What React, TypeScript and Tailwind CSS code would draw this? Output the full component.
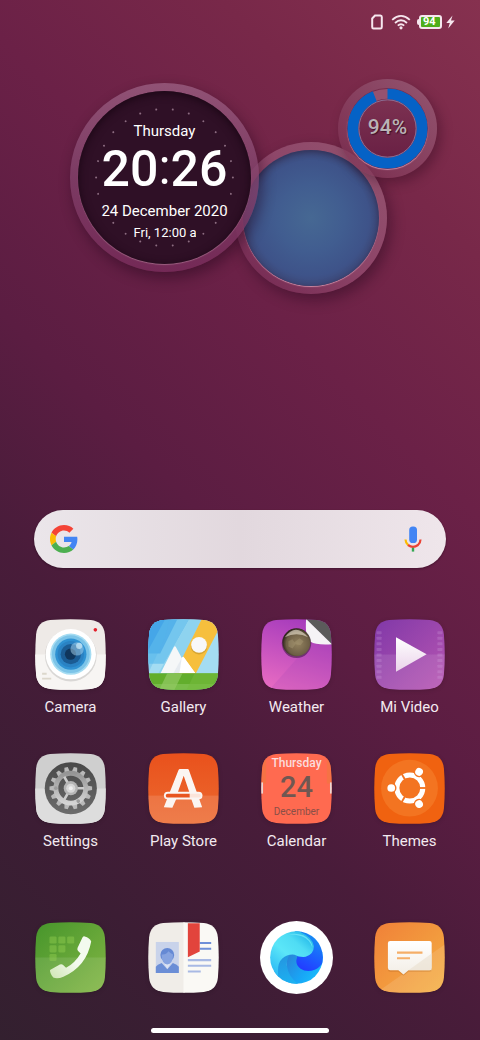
import type { ReactNode } from "react";

const SQUIRCLE =
  "M15 1.1 Q35 -.6 55 1.1 Q67.6 2.4 68.9 15 Q70.6 35 68.9 55 Q67.6 67.6 55 68.9 Q35 70.6 15 68.9 Q2.4 67.6 1.1 55 Q-.6 35 1.1 15 Q2.4 2.4 15 1.1Z";

function Tile({ id, children }: { id: string; children: ReactNode }) {
  return (
    <svg viewBox="0 0 70 70" className="block size-[71px] drop-shadow-sm" aria-hidden="true">
      <defs>
        <clipPath id={`${id}-clip`}>
          <path d={SQUIRCLE} />
        </clipPath>
      </defs>
      <g clipPath={`url(#${id}-clip)`}>{children}</g>
    </svg>
  );
}

function Gradient({ id, from, to, diagonal = false }: { id: string; from: string; to: string; diagonal?: boolean }) {
  return (
    <linearGradient id={id} x1="0" y1="0" x2={diagonal ? "1" : "0"} y2="1">
      <stop offset="0" stopColor={from} />
      <stop offset="1" stopColor={to} />
    </linearGradient>
  );
}

function CameraIcon() {
  return (
    <Tile id="camera">
      <rect width="70" height="70" fill="#eeeae7" />
      <rect y="35" width="70" height="35" fill="#f7f5f3" />
      <circle cx="35.3" cy="36" r="25.5" fill="#000" opacity=".12" />
      <circle cx="35.3" cy="34.7" r="24.8" fill="#fff" />
      <circle cx="35.3" cy="34.7" r="20.3" fill="#a5dcf2" />
      <circle cx="35.3" cy="34.7" r="18.6" fill="#7cc4e8" />
      <circle cx="35.3" cy="34.7" r="15.4" fill="#2f92d3" />
      <circle cx="35.3" cy="34.7" r="13" fill="#2a82c3" />
      <circle cx="35.3" cy="34.7" r="10" fill="#1b5c94" />
      <circle cx="35" cy="34.7" r="5.5" fill="#10365c" />
      <circle cx="41.5" cy="29.5" r="6.6" fill="#a9d5ef" opacity=".5" />
      <circle cx="43.5" cy="26.5" r="3" fill="#d9f1fa" opacity=".65" />
      <circle cx="59.5" cy="10.7" r="1.8" fill="#e3202b" />
      <path d="M7 54h4.5M7 58.7h9" stroke="#dcd7cc" strokeWidth="1.8" />
    </Tile>
  );
}

function GalleryIcon() {
  return (
    <Tile id="gallery">
      <rect width="70" height="70" fill="#a4dcf2" />
      <path d="M0 0H41L16 44H0Z" fill="#74c6ee" />
      <path d="M0 0H29L12 34H0Z" fill="#55b2ea" />
      <path d="M0 0H17L0 31Z" fill="#3e9ee6" />
      <path d="M41 0H53L27 54H10Z" fill="#8ed3ef" />
      <path d="M0 54L17 18L21 0H0Z" fill="#54b4ea" opacity=".35" />
      <path d="M53 0H75L47 54H26Z" fill="#f6bf3d" />
      <rect y="53.5" width="70" height="17" fill="#62ae2c" />
      <path d="M0 64H70V70H0Z" fill="#79bd49" />
      <path d="M19 53.5H34L26 70H11Z" fill="#93c964" opacity=".7" />
      <path d="M46 53.5H70L62 70H38Z" fill="#74b93c" opacity=".6" />
      <path d="M12.5 53.2L25.5 27.5Q26.5 26 27.5 27.5L33.3 38.5L34.8 37L46.5 53.2Z" fill="#f5f7f8" />
      <path d="M33.3 38.5Q34.5 36.5 35.6 38.3L46.5 53.2H25Z" fill="#fff" />
      <path d="M33.3 38.5L25 53.2H31Z" fill="#dbe3ea" opacity=".7" />
      <circle cx="50.3" cy="27" r="8" fill="#8a6717" opacity=".3" />
      <circle cx="50.3" cy="25.5" r="7.8" fill="#f8f8f8" />
    </Tile>
  );
}

function WeatherIcon() {
  return (
    <Tile id="weather">
      <defs>
        <linearGradient id="weather-bg" x1=".6" y1="0" x2=".3" y2="1">
          <stop offset="0" stopColor="#a63bbc" />
          <stop offset="1" stopColor="#e66ac2" />
        </linearGradient>
        <radialGradient id="weather-moon" cx=".55" cy=".55" r=".55">
          <stop offset="0" stopColor="#93825f" />
          <stop offset=".75" stopColor="#6d5e45" />
          <stop offset="1" stopColor="#2e251c" />
        </radialGradient>
      </defs>
      <rect width="70" height="70" fill="url(#weather-bg)" />
      <path d="M70 0V70H8Z" fill="#9b45b4" opacity=".18" />
      <path d="M44 0H70V26Z" fill="#5b5b5b" />
      <path d="M44.5 0Q43 18 49 22.5Q54 26 70 25Z" fill="#f5f3f6" />
      <circle cx="35" cy="24" r="14.5" fill="#2a1030" opacity=".5" />
      <circle cx="35" cy="23" r="13.8" fill="url(#weather-moon)" />
      <path d="M23.5 18Q34 3 46.5 18Q35 12 23.5 18Z" fill="#eee6d4" opacity=".6" />
      <path d="M27 22l4-2 2 3 5-4 4 3-3 4-5-1-3 4-4-2z" fill="#b3a27e" opacity=".35" />
    </Tile>
  );
}

const FILM_HOLES = [12, 17.5, 23, 28.5, 34, 39.5, 45, 50.5, 56];

function VideoIcon() {
  return (
    <Tile id="video">
      <defs>
        <Gradient id="video-bg" from="#8038a8" to="#b856b2" diagonal />
        <Gradient id="video-play" from="#fff" to="#ead3ea" />
      </defs>
      <rect width="70" height="70" fill="url(#video-bg)" />
      <rect y="35" width="70" height="35" fill="#fff" opacity=".1" />
      {FILM_HOLES.map((y) => (
        <g key={y} fill="#dcb2e8" opacity=".22">
          <rect x="2.5" y={y} width="5" height="3" rx=".6" />
          <rect x="62.5" y={y} width="5" height="3" rx=".6" />
        </g>
      ))}
      <path d="M21.7 18L51.9 34.7L21.7 52Z" fill="url(#video-play)" />
    </Tile>
  );
}

const TEETH = Array.from({ length: 14 }, (_, i) => ((i + 0.5) * 360) / 14);

function SettingsIcon() {
  return (
    <Tile id="settings">
      <defs>
        <Gradient id="settings-gear" from="#959595" to="#d4d4d4" />
        <Gradient id="settings-well" from="#484848" to="#6c6c6c" />
      </defs>
      <rect width="70" height="70" fill="#cfcfcf" />
      <rect y="35" width="70" height="35" fill="#dddddd" />
      <circle cx="35.3" cy="34.7" r="25.7" fill="url(#settings-well)" />
      <g transform="translate(35.3 34.7)">
        {TEETH.map((a) => (
          <path key={a} d="M-2.7 -16L-1.7 -21H1.7L2.7 -16Z" fill="#b9b9b9" transform={`rotate(${a})`} />
        ))}
        <circle r="14.7" fill="none" stroke="url(#settings-gear)" strokeWidth="4.8" />
        {[0, 120, 240].map((a) => (
          <path key={a} d="M0 -1.3H13V1.3H0Z" fill="#cccccc" transform={`rotate(${a})`} />
        ))}
        {[60, 180, 300].map((a) => (
          <circle key={a} cx="14.7" r="1.8" fill="#9c9c9c" transform={`rotate(${a})`} />
        ))}
        <circle r="7" fill="#b5b5b5" />
        <circle r="4.5" fill="#d7d7d7" />
        <circle r="2" fill="#efefef" />
      </g>
    </Tile>
  );
}

function PlayStoreIcon() {
  return (
    <Tile id="store">
      <defs>
        <Gradient id="store-bg" from="#e9511c" to="#ec6a30" />
      </defs>
      <rect width="70" height="70" fill="url(#store-bg)" />
      <rect y="42" width="70" height="28" fill="#fff" opacity=".13" />
      <path
        d="M31.5 15.8H39Q40 15.8 40.4 17L53.4 53.5L45.7 54L42.6 45H28L24 54L15.6 53.5L30 17Q30.5 15.8 31.5 15.8ZM35.2 22.5L29.5 38.5H40.7Z"
        fill="#fbf5f2"
        fillRule="evenodd"
      />
      <rect x="15.7" y="38.2" width="38" height="7.6" rx="3.8" fill="#fbf5f2" />
      <path d="M19.4 40.2H41.2V43.9H19.4A1.85 1.85 0 0 1 19.4 40.2Z" fill="#e8541f" />
      <path d="M41.2 40.2H50A1.85 1.85 0 0 1 50 43.9H41.2Z" fill="#fbe4da" />
    </Tile>
  );
}

function CalendarIcon() {
  return (
    <span className="relative block size-[71px]">
      <Tile id="calendar">
        <rect width="70" height="70" fill="#ff6a50" />
        <path d="M0 0H5V30H0ZM65 0H70V30H65Z" fill="#f0783e" opacity=".6" />
        <rect x="0" y="29" width="2" height="11" fill="#e9d7d4" />
        <rect x="68" y="29" width="2" height="11" fill="#e9d7d4" />
      </Tile>
      <span className="absolute inset-0 flex flex-col items-center pt-1 text-center">
        <span className="text-[12px] leading-[13px] font-medium text-[#fbdcdc]">Thursday</span>
        <span className="text-[29px] leading-[34px] font-medium text-[#6f5752]">24</span>
        <span className="text-[10px] leading-4 text-[#8a4f47]">December</span>
      </span>
    </span>
  );
}

function ThemesIcon() {
  return (
    <Tile id="themes">
      <rect width="70" height="70" fill="#f06210" />
      <circle cx="35" cy="34.7" r="28" fill="#f37421" />
      <g transform="translate(35.3 34.5)">
        <circle r="12.8" fill="none" stroke="#fff" strokeWidth="5" />
        {[0, 120, 240].map((a) => (
          <rect key={a} x="8" y="-.9" width="9" height="1.8" fill="#f37421" transform={`rotate(${a})`} />
        ))}
        {[60, 180, 300].map((a) => (
          <g key={a} transform={`rotate(${a})`}>
            <circle cx="18.3" r="5.2" fill="#f37421" />
            <circle cx="18.3" r="3.8" fill="#fff" />
          </g>
        ))}
      </g>
    </Tile>
  );
}

const KEYPAD = [
  [14.3, 14.3],
  [23, 14.3],
  [31.7, 14.3],
  [14.3, 23],
  [23, 23],
  [14.3, 31.5],
];

function PhoneIcon() {
  return (
    <Tile id="phone">
      <defs>
        <Gradient id="phone-bg" from="#46952b" to="#83b644" diagonal />
        <linearGradient id="phone-handset" x1="1" y1="0" x2="0" y2="1">
          <stop offset=".5" stopColor="#f3faee" />
          <stop offset="1" stopColor="#cfe6b4" />
        </linearGradient>
      </defs>
      <rect width="70" height="70" fill="url(#phone-bg)" />
      <rect y="35" width="70" height="35" fill="#fff" opacity=".1" />
      {KEYPAD.map(([x, y]) => (
        <rect key={`${x}-${y}`} x={x} y={y} width="7" height="7" rx="1.3" fill="#93cf4f" opacity=".45" />
      ))}
      <path
        d="M49 14.2Q54 15.5 55.4 19.2Q51 43.5 28 54Q22 56.6 18 54.8Q14.6 50.5 14.8 47.3L24.5 42Q26.5 41.2 28 42.7L30.6 45Q39 41 45 31L42.3 28.3Q41.3 27 42 25.3L46.8 15.2Q47.6 14 49 14.2Z"
        fill="url(#phone-handset)"
      />
    </Tile>
  );
}

function ContactsIcon() {
  return (
    <Tile id="contacts">
      <rect width="36" height="70" fill="#f0ede8" />
      <rect x="35" width="35" height="70" fill="#faf9f5" />
      <rect x="7.7" y="19.7" width="22.7" height="30.5" fill="#c9d3ea" />
      <path d="M7.7 50.2V44Q9 42 13.5 40.5L19 46.5L24.5 40.5Q29 42 30.4 44V50.2Z" fill="#6b8ed6" />
      <path d="M15 39.5H23L19 46Z" fill="#dce4f5" />
      <circle cx="19" cy="32.5" r="6.8" fill="#6589d4" />
      <path d="M13.4 32Q18 32.5 20 28.8Q23 31.5 24.7 32Q24.5 41.5 19 41.8Q13.5 41.5 13.4 32Z" fill="#86a3e0" />
      <path d="M51 20.8H62.3M51 26.4H62.3" stroke="#6f8fd8" strokeWidth="2" />
      <path d="M39.3 37.6H62.3M39.3 43.2H62.3M39.3 48.8H52" stroke="#a8b9e4" strokeWidth="2" />
      <path d="M39.3 1.2H51V29L39.3 34.8Z" fill="#e2443c" />
    </Tile>
  );
}

function BrowserIcon() {
  return (
    <svg viewBox="0 0 72 72" className="block size-[73px]" aria-hidden="true">
      <defs>
        <clipPath id="browser-clip">
          <circle cx="36" cy="36" r="26" />
        </clipPath>
        <linearGradient id="browser-wave" x1=".1" y1=".9" x2=".8" y2=".1">
          <stop offset="0" stopColor="#2ebcf5" />
          <stop offset=".45" stopColor="#5be6f8" />
          <stop offset=".75" stopColor="#4fdcf4" />
          <stop offset="1" stopColor="#27bbea" />
        </linearGradient>
        <linearGradient id="browser-deep" x1=".2" y1="1" x2=".6" y2="0">
          <stop offset="0" stopColor="#2437ff" />
          <stop offset=".4" stopColor="#1c5cff" />
          <stop offset="1" stopColor="#1499f0" />
        </linearGradient>
        <linearGradient id="browser-sea" x1="0" y1="0" x2="1" y2=".6">
          <stop offset="0" stopColor="#2c7fd4" />
          <stop offset=".6" stopColor="#18a6f6" />
          <stop offset="1" stopColor="#1ac0fb" />
        </linearGradient>
        <linearGradient id="browser-wedge" x1=".4" y1="0" x2=".6" y2="1">
          <stop offset="0" stopColor="#2592de" />
          <stop offset="1" stopColor="#1cb2f2" />
        </linearGradient>
      </defs>
      <circle cx="36" cy="36" r="36" fill="#fff" />
      <g clipPath="url(#browser-clip)">
        <path d="M26 30H64V64H26Z" fill="url(#browser-sea)" />
        <path d="M34 8H64V36Q61 45 54 48Q46 51 40 47Q35 43 36 38L37.5 33Z" fill="url(#browser-deep)" />
        <path d="M31 32Q26 36 26.5 44Q28 56 39 63H14V40L24 30Z" fill="url(#browser-wedge)" />
        <path
          d="M18 54Q16.5 42 22 37Q27 32.5 34 33.2Q39 36 45 35.3Q53 33 53.2 25Q52 16 41 11.5L36 8H8V54Z"
          fill="url(#browser-wave)"
        />
        <path d="M28 13Q43 11 49 19Q52 23 51.5 26Q49 18 41 15Q35 13 28 13Z" fill="#8af4fb" opacity=".6" />
      </g>
    </svg>
  );
}

function MessagesIcon() {
  return (
    <Tile id="messages">
      <defs>
        <Gradient id="messages-bg" from="#f08038" to="#f4b043" diagonal />
        <Gradient id="messages-bubble" from="#ffffff" to="#f3eee6" />
      </defs>
      <rect width="70" height="70" fill="url(#messages-bg)" />
      <path d="M70 22V70H2Z" fill="#fff" opacity=".12" />
      <path d="M16 20.5H54.7Q56.9 20.5 56.9 22.5V46.5Q56.9 49 54.7 49H34L29 53L24 49H16Q13.7 49 13.7 46.5V22.5Q13.7 20.5 16 20.5Z" fill="#a4540f" opacity=".25" />
      <path
        d="M16 18.7H54.7Q56.9 18.7 56.9 21V45Q56.9 47.5 54.7 47.5H34L29 51.7L24 47.5H16Q13.7 47.5 13.7 45V21Q13.7 18.7 16 18.7Z"
        fill="url(#messages-bubble)"
      />
      <path d="M56.9 31V47.5H34Z" fill="#e9dfcf" opacity=".6" />
      <path d="M22.7 30.2H47.8M22.7 35.8H35.5" stroke="#f5ae68" strokeWidth="2" />
    </Tile>
  );
}

const APPS = [
  { name: "Camera", icon: <CameraIcon /> },
  { name: "Gallery", icon: <GalleryIcon /> },
  { name: "Weather", icon: <WeatherIcon /> },
  { name: "Mi Video", icon: <VideoIcon /> },
  { name: "Settings", icon: <SettingsIcon /> },
  { name: "Play Store", icon: <PlayStoreIcon /> },
  { name: "Calendar", icon: <CalendarIcon /> },
  { name: "Themes", icon: <ThemesIcon /> },
];

const DOCK = [
  { name: "Phone", icon: <PhoneIcon /> },
  { name: "Contacts", icon: <ContactsIcon /> },
  { name: "Browser", icon: <BrowserIcon /> },
  { name: "Messages", icon: <MessagesIcon /> },
];

function StatusBar() {
  return (
    <header className="flex h-11 items-center justify-end pr-[25px] text-[#f6e6ee]">
      <svg viewBox="0 0 12 16" className="mr-2 h-4 w-3" fill="none" aria-label="SIM card">
        <path d="M4 1.5H9.4Q10.8 1.5 10.8 3V13Q10.8 14.5 9.4 14.5H2.6Q1.2 14.5 1.2 13V4.5Z" stroke="currentColor" strokeWidth="2" />
      </svg>
      <svg viewBox="0 0 20 16" className="mr-1.5 h-4 w-5" fill="none" aria-label="Wi-Fi">
        <path d="M1.2 5.8Q10 -2 18.8 5.8M4 9Q10 3.6 16 9M6.8 11.6Q10 8.8 13.2 11.6" stroke="currentColor" strokeWidth="1.8" />
        <circle cx="10" cy="13.8" r="1.6" fill="currentColor" />
      </svg>
      <span className="mr-1 flex items-center" aria-label="Battery 94 percent">
        <span className="h-1.5 w-0.5 rounded-l-sm bg-[#f6e6ee]" />
        <span className="flex h-[14px] w-[23px] items-center rounded-[3px] border-2 border-[#f6e6ee] bg-[#4fae1b] pl-0.5 text-[11px] leading-[10px] font-bold text-white">
          94
        </span>
      </span>
      <svg viewBox="0 0 9 14" className="h-3.5 w-[9px]" fill="currentColor" aria-label="Charging">
        <path d="M6.5 0.5L0.3 8H3.8L2.2 13.5L8.7 5.6H5Z" />
      </svg>
    </header>
  );
}

const DOTS = Array.from({ length: 26 }, (_, i) => ((i + 0.5) * 360) / 26);

function ClockWidget() {
  return (
    <section
      aria-label="Clock"
      className="relative z-10 mt-1 size-[189px] shrink-0 rounded-full bg-linear-to-b from-[#94577a]/90 via-[#81416a]/80 to-[#752a58]/90 p-2 shadow-[3px_6px_14px_rgba(30,5,25,0.45)]"
    >
      <div className="relative flex size-full flex-col items-center overflow-hidden rounded-full bg-[#2f1026] pt-[31px] text-white shadow-[inset_0_2px_8px_#1a0614,0_1px_1px_#9b6080]">
        <svg viewBox="-86 -86 172 172" className="absolute inset-0" fill="#8c6c80" aria-hidden="true">
          {DOTS.map((a) => (
            <circle key={a} cy="-68" r="1" transform={`rotate(${a})`} />
          ))}
        </svg>
        <div className="relative flex flex-col items-center">
          <span className="text-[15px] leading-[18px]">Thursday</span>
          <span className="flex items-center text-[50px] leading-[54px] font-medium">
            20<span className="pb-1 font-normal">:</span>26
          </span>
          <span className="mt-1 text-[15px] leading-[18px] whitespace-nowrap">24 December 2020</span>
          <span className="mt-1 w-[62px] overflow-hidden text-[13px] leading-[18px] whitespace-nowrap">Fri, 12:00 am</span>
        </div>
      </div>
    </section>
  );
}

function WeatherOrb() {
  return (
    <div className="-ml-6 mt-[63px] size-[152px] shrink-0 rounded-full bg-linear-to-tr from-[#74285588] via-[#8d4468] to-[#94546f] p-2 shadow-[4px_6px_14px_rgba(30,5,25,0.4)]">
      <div className="size-full rounded-full bg-[radial-gradient(circle,#466893_0%,#415d90_35%,#3e5389_60%,#3d4674_75%)] shadow-[inset_0_2px_6px_rgba(40,30,60,0.6),0_1px_1px_#c98aa4]" />
    </div>
  );
}

function BatteryWidget({ level }: { level: number }) {
  return (
    <section
      aria-label="Battery"
      className="-ml-[49px] flex size-[99px] shrink-0 items-center justify-center rounded-full bg-linear-to-tr from-[#7a2c5088] via-[#87405f] to-[#935570] shadow-[4px_5px_12px_rgba(40,5,25,0.35)]"
    >
      <div className="relative flex size-[81px] items-center justify-center rounded-full bg-[#752b4b] shadow-[0_1px_1px_#c98aa4]">
        <svg viewBox="0 0 82 82" className="absolute inset-0 -rotate-90" fill="none" aria-hidden="true">
          <circle cx="41" cy="41" r="35" stroke="#96526f" strokeWidth="10" />
          <circle cx="41" cy="41" r="35" stroke="#0562c6" strokeWidth="11" pathLength="100" strokeDasharray={`${level} 100`} />
          <circle cx="41" cy="41" r="29" stroke="#8c7196" strokeWidth="1" />
        </svg>
        <div className="flex size-[58px] items-center justify-center rounded-full bg-linear-to-b from-[#7c3151] to-[#692044]">
          <span className="pb-1 text-[21px] leading-6 font-medium text-[#b9b3b5] [text-shadow:1px_1px_1px_#401028]">{level}%</span>
        </div>
      </div>
    </section>
  );
}

function GoogleLogo() {
  return (
    <svg viewBox="0 0 48 48" className="size-7" aria-hidden="true">
      <path fill="#F44336" d="M24 9.5c3.54 0 6.71 1.22 9.21 3.6l6.85-6.85C35.9 2.38 30.47 0 24 0 14.62 0 6.51 5.38 2.56 13.22l7.98 6.19C12.43 13.72 17.74 9.5 24 9.5z" />
      <path fill="#4285F4" d="M46.98 24.55c0-1.57-.15-3.09-.38-4.55H24v9.02h12.94c-.58 2.96-2.26 5.48-4.78 7.18l7.73 6c4.51-4.18 7.09-10.36 7.09-17.65z" />
      <path fill="#FBBC05" d="M10.53 28.59c-.48-1.45-.76-2.99-.76-4.59s.27-3.14.76-4.59l-7.98-6.19C.92 16.46 0 20.12 0 24c0 3.88.92 7.54 2.56 10.78l7.97-6.19z" />
      <path fill="#4CAF50" d="M24 48c6.48 0 11.93-2.13 15.89-5.81l-7.73-6c-2.15 1.45-4.92 2.3-8.16 2.3-6.26 0-11.57-4.22-13.47-9.91l-7.98 6.19C6.51 42.62 14.62 48 24 48z" />
    </svg>
  );
}

function MicIcon() {
  return (
    <svg viewBox="0 0 18 26" className="h-[26px] w-[18px]" fill="none" aria-hidden="true">
      <rect x="5.2" y=".5" width="7.8" height="16.5" rx="3.6" fill="#4285f4" />
      <path d="M1.5 13.5Q1.7 17.2 4.2 19.2" stroke="#fbbc05" strokeWidth="2.2" />
      <path d="M4 19Q9 22.8 14 19Q16.4 17 16.5 13.5" stroke="#ea4335" strokeWidth="2.2" />
      <path d="M9 21.8V25.6" stroke="#34a853" strokeWidth="2.4" />
    </svg>
  );
}

function SearchBar() {
  return (
    <form
      role="search"
      className="mx-[33px] mt-[215px] flex h-[60px] items-center rounded-full border border-transparent bg-linear-to-r from-[#ebe6ea] via-[#e2d8de] to-[#efe6eb] bg-clip-padding px-4 [filter:drop-shadow(0_1px_1px_rgba(20,0,15,0.4))]"
    >
      <GoogleLogo />
      <input
        type="text"
        aria-label="Search"
        className="h-10 min-w-0 flex-1 bg-transparent px-3 text-[#222] outline-none"
      />
      <button type="button" aria-label="Voice search" className="flex size-[34px] items-center justify-center">
        <MicIcon />
      </button>
    </form>
  );
}

export default function App() {
  return (
    <div className="flex min-h-screen flex-col bg-[linear-gradient(45deg,#33202f_0%,#3c1d34_16%,#491c3a_33%,#5b1d42_48%,#6b2147_66%,#782849_83%,#86314f_100%)] font-['Roboto','Noto_Sans',sans-serif]">
      <StatusBar />
      <main className="flex flex-1 flex-col">
        <div className="mt-[35px] flex items-start justify-center pl-[27px]">
          <ClockWidget />
          <WeatherOrb />
          <BatteryWidget level={94} />
        </div>
        <SearchBar />
        <nav aria-label="Apps" className="mt-[50px] grid grid-cols-4 gap-y-9 px-3.5">
          {APPS.map((app) => (
            <button key={app.name} type="button" className="flex flex-col items-center gap-[7px]">
              {app.icon}
              <span className="text-[15px] leading-5 whitespace-nowrap text-[#f3eaf0]">{app.name}</span>
            </button>
          ))}
        </nav>
      </main>
      <footer className="flex flex-col">
        <nav aria-label="Dock" className="grid grid-cols-4 items-center px-3.5">
          {DOCK.map((app) => (
            <button key={app.name} type="button" aria-label={app.name} className="flex justify-center">
              {app.icon}
            </button>
          ))}
        </nav>
        <div className="mx-auto mt-[34px] mb-[7px] h-[5px] w-[178px] rounded-full bg-white" />
      </footer>
    </div>
  );
}
